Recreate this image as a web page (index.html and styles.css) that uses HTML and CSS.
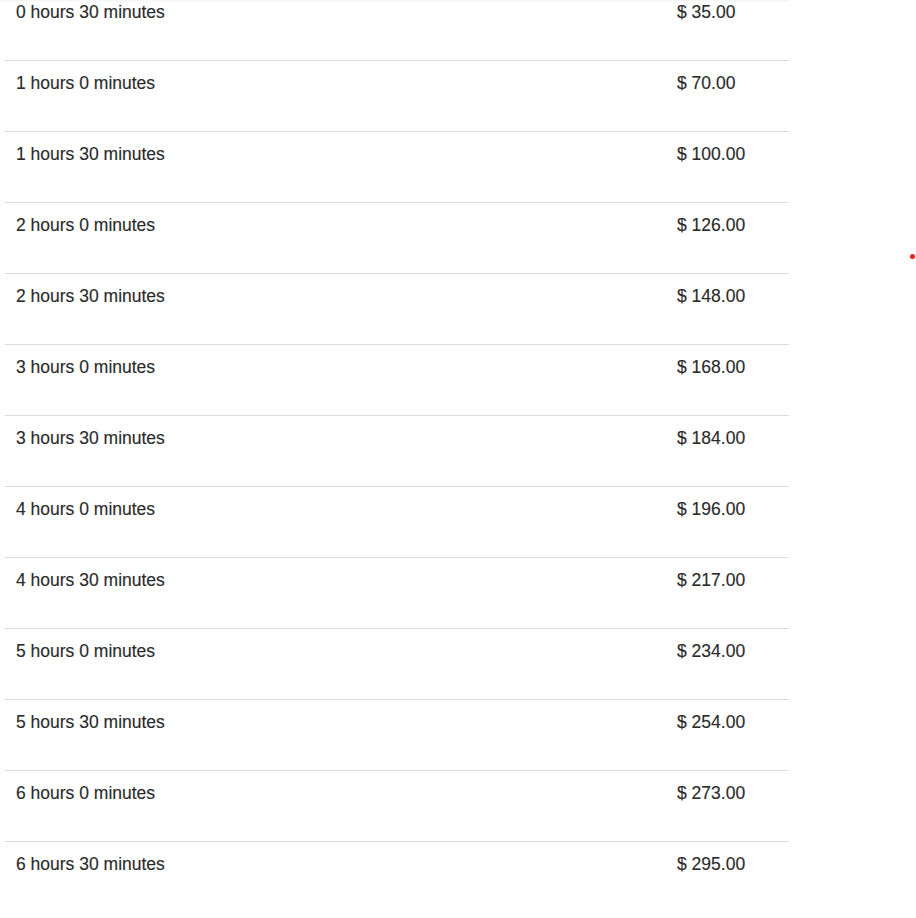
FILE: index.html
```html
<!DOCTYPE html>
<html>
<head>
<meta charset="utf-8">
<link rel="stylesheet" href="styles.css">
</head>
<body>
<div class="page">
  <div class="table">
    <div class="row"><div class="cell">0 hours 30 minutes</div><div class="cell">$ 35.00</div></div>
    <div class="row"><div class="cell">1 hours 0 minutes</div><div class="cell">$ 70.00</div></div>
    <div class="row"><div class="cell">1 hours 30 minutes</div><div class="cell">$ 100.00</div></div>
    <div class="row"><div class="cell">2 hours 0 minutes</div><div class="cell">$ 126.00</div></div>
    <div class="row"><div class="cell">2 hours 30 minutes</div><div class="cell">$ 148.00</div></div>
    <div class="row"><div class="cell">3 hours 0 minutes</div><div class="cell">$ 168.00</div></div>
    <div class="row"><div class="cell">3 hours 30 minutes</div><div class="cell">$ 184.00</div></div>
    <div class="row"><div class="cell">4 hours 0 minutes</div><div class="cell">$ 196.00</div></div>
    <div class="row"><div class="cell">4 hours 30 minutes</div><div class="cell">$ 217.00</div></div>
    <div class="row"><div class="cell">5 hours 0 minutes</div><div class="cell">$ 234.00</div></div>
    <div class="row"><div class="cell">5 hours 30 minutes</div><div class="cell">$ 254.00</div></div>
    <div class="row"><div class="cell">6 hours 0 minutes</div><div class="cell">$ 273.00</div></div>
    <div class="row"><div class="cell">6 hours 30 minutes</div><div class="cell">$ 295.00</div></div>
  </div>
  <span class="dot"></span>
</div>
</body>
</html>
```
FILE: styles.css
```css
html, body {
  margin: 0;
  padding: 0;
  background: #fff;
  overflow: hidden;
}
body {
  font-family: "Liberation Sans", Arial, sans-serif;
  color: #2b2b2b;
}
.page {
  position: relative;
  width: 916px;
  height: 918px;
  overflow: hidden;
}
.page::before {
  content: "";
  position: absolute;
  left: 0;
  top: 0;
  width: 789px;
  height: 2px;
  background: linear-gradient(#f4f4f4, #fff);
}
.table {
  margin-top: -11px;
  margin-left: 5px;
  width: 784px;
}
.row {
  display: grid;
  grid-template-columns: 661px 1fr;
  height: 70px;
  border-top: 1px solid #ddd;
  box-sizing: content-box;
}
.cell {
  padding: 10px 11px 0;
  font-size: 17.5px;
  line-height: 24px;
  -webkit-text-stroke: 0.15px #2b2b2b;
}
.dot {
  position: absolute;
  left: 910px;
  top: 254px;
  width: 5px;
  height: 5px;
  border-radius: 50%;
  background: #e8231f;
}
```
